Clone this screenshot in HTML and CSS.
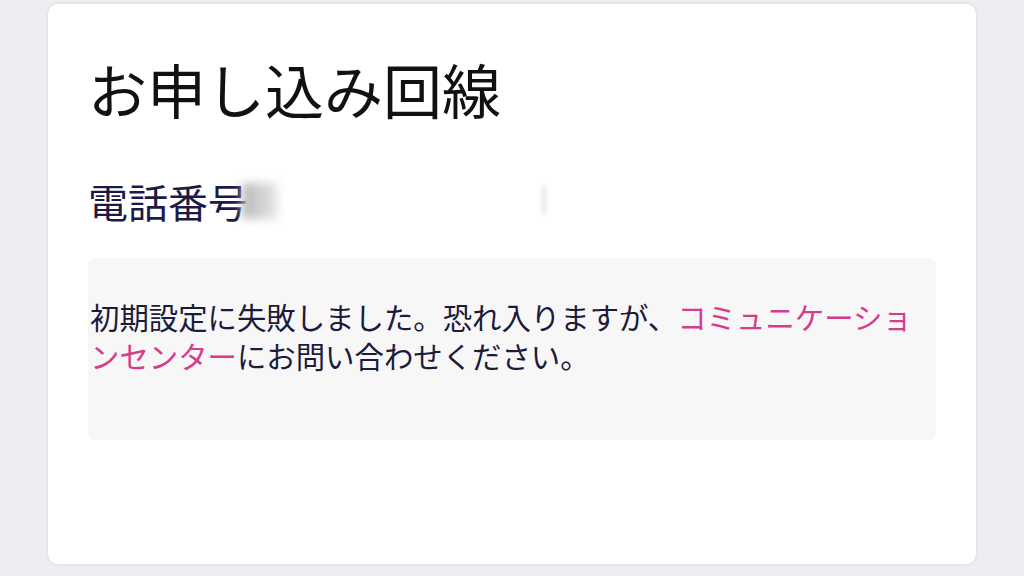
FILE: index.html
```html
<!DOCTYPE html>
<html lang="ja">
<head>
<meta charset="utf-8">
<link rel="stylesheet" href="styles.css">
</head>
<body>
<div class="card">
  <h1 class="title">お申し込み回線</h1>
  <div class="phone"><span class="label">電話番号</span><span class="mask"></span><span class="mask2"></span></div>
  <div class="notice">
    <p class="msg">初期設定に失敗しました。恐れ入りますが、<a class="link" href="#">コミュニケーションセンター</a>にお問い合わせください。</p>
  </div>
</div>
</body>
</html>
```
FILE: styles.css
```css
html, body {
  margin: 0;
  padding: 0;
}
body {
  width: 1024px;
  height: 576px;
  background: #ededf2;
  font-family: "Noto Sans CJK JP", "Noto Sans", sans-serif;
  overflow: hidden;
}
.card {
  box-sizing: border-box;
  margin: 4px 0 0 48px;
  width: 928px;
  height: 560px;
  background: #ffffff;
  border-radius: 10px;
  box-shadow: 0 0 3px rgba(120, 120, 150, 0.25);
  padding: 50px 40px 0 40px;
}
.title {
  margin: 0;
  font-size: 59px;
  line-height: 70px;
  font-weight: 400;
  color: #111111;
}
.phone {
  margin-top: 53px;
  height: 48px;
  display: flex;
  align-items: center;
  position: relative;
}
.label {
  font-size: 40px;
  line-height: 48px;
  color: #1c1b45;
}
.mask {
  display: inline-block;
  width: 36px;
  height: 36px;
  margin-left: -6px;
  background: linear-gradient(90deg, #b8b8bc, #e8e8ea);
  filter: blur(5px);
}
.mask2 {
  position: absolute;
  left: 454px;
  top: 10px;
  width: 4px;
  height: 26px;
  background: #e4e4e6;
  filter: blur(2px);
}
.notice {
  box-sizing: border-box;
  margin-top: 33px;
  width: 848px;
  height: 182px;
  background: #f7f7f8;
  border-radius: 8px;
  padding: 39px 2px 0 2px;
}
.msg {
  margin: 0;
  font-size: 29.4px;
  line-height: 39px;
  color: #1c1b3a;
  line-break: strict;
}
.link {
  color: #d63c8c;
  text-decoration: none;
}
```
